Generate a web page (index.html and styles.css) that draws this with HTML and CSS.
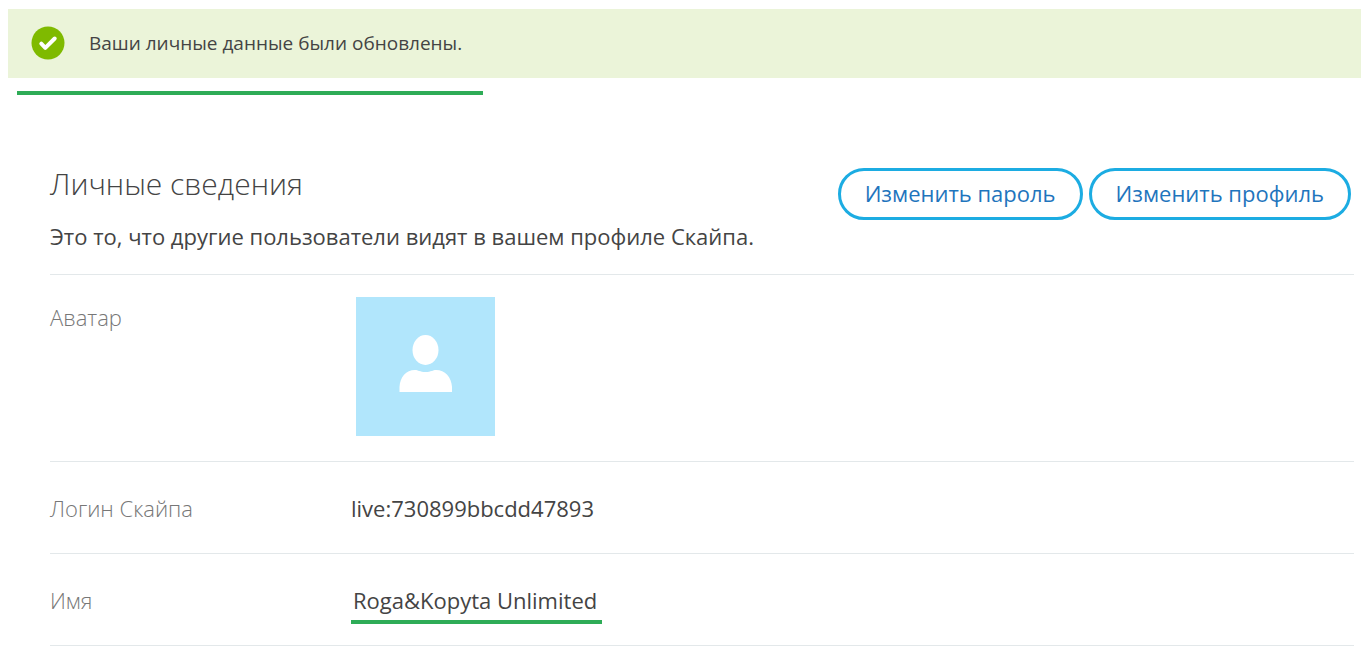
FILE: index.html
```html
<!DOCTYPE html>
<html lang="ru">
<head>
<meta charset="utf-8">
<title>Личные сведения</title>
<link rel="stylesheet" href="styles.css">
</head>
<body>
<div class="notice" role="status">
  <svg class="notice-icon" viewBox="0 0 34 34" aria-hidden="true">
    <circle cx="17" cy="17" r="16.5" fill="#7fba00"/>
    <path d="M10.3 17.7l4 4.1 9.4-9.3" fill="none" stroke="#fff" stroke-width="4" stroke-linejoin="round" stroke-linecap="round"/>
  </svg>
  <p class="notice-text">Ваши личные данные были обновлены.</p>
</div>
<div class="marker"></div>
<main class="profile">
  <header class="profile-head">
    <div>
      <h1 class="title">Личные сведения</h1>
      <p class="subtitle">Это то, что другие пользователи видят в вашем профиле Скайпа.</p>
    </div>
    <div class="actions">
      <button class="pill" type="button">Изменить пароль</button>
      <button class="pill" type="button">Изменить профиль</button>
    </div>
  </header>
  <dl class="fields">
    <div class="field field-avatar">
      <dt class="label">Аватар</dt>
      <dd class="picture">
        <svg class="avatar" viewBox="0 0 139 139" role="img" aria-label="Аватар">
          <rect width="139" height="139" fill="#b1e6fc"/>
          <ellipse cx="69.5" cy="53" rx="13" ry="15" fill="#fff"/>
          <path d="M43.5 95V90C44 80 50 73 59 73C62 73 64 75 69.500 75S77 73 80 73C89 73 95.500 80 96 90V95Z" fill="#fff"/>
        </svg>
      </dd>
    </div>
    <div class="field">
      <dt class="label">Логин Скайпа</dt>
      <dd class="value">live:730899bbcdd47893</dd>
    </div>
    <div class="field">
      <dt class="label">Имя</dt>
      <dd class="value"><span class="marked">Roga&amp;Kopyta Unlimited</span></dd>
    </div>
  </dl>
</main>
</body>
</html>
```
FILE: styles.css
```css
* { box-sizing: border-box; }
body {
  margin: 0;
  padding: 9px 0 0 8px;
  background: #fff;
  color: #444;
  font-family: "Open Sans", "Noto Sans", sans-serif;
  font-size: 22px;
  line-height: 32px;
}
h1, p, dl, dd { margin: 0; }
.notice {
  display: flex;
  align-items: center;
  gap: 24px;
  padding: 17px 24px 18px 23px;
  background: #ebf4d9;
}
.notice-icon { width: 34px; height: 34px; flex: none; }
.notice-text { font-size: 19px; }
.marker {
  width: 35%;
  max-width: 466px;
  height: 4px;
  margin: 13px 0 0 9px;
  background: #2eac57;
}
.profile { padding: 65px 7px 0 42px; }
.profile-head {
  display: flex;
  justify-content: space-between;
  align-items: flex-start;
  padding: 8px 3px 22px 0;
}
.title {
  margin-bottom: 20px;
  font-size: 30px;
  line-height: 32px;
  font-weight: 300;
}
.actions { display: flex; gap: 6px; }
.pill {
  height: 52px;
  padding: 0 24px 2px;
  border: 3px solid #1cace2;
  border-radius: 26px;
  background: #fff;
  color: #1f75bd;
  font: inherit;
  white-space: nowrap;
}
.fields { border-top: 1px solid #e3e8ea; }
.field {
  display: grid;
  grid-template-columns: 301px 1fr;
  padding: 30px 0 29px;
  border-bottom: 1px solid #e3e8ea;
}
.field-avatar { padding: 22px 0 25px; }
.label { color: #777; font-weight: 300; }
.field-avatar .label { padding-top: 4px; }
.picture { padding-left: 5px; }
.avatar { display: block; width: 139px; height: 139px; }
.marked {
  padding: 0 5px 5px 2px;
  border-bottom: 4px solid #2eac57;
}
```
